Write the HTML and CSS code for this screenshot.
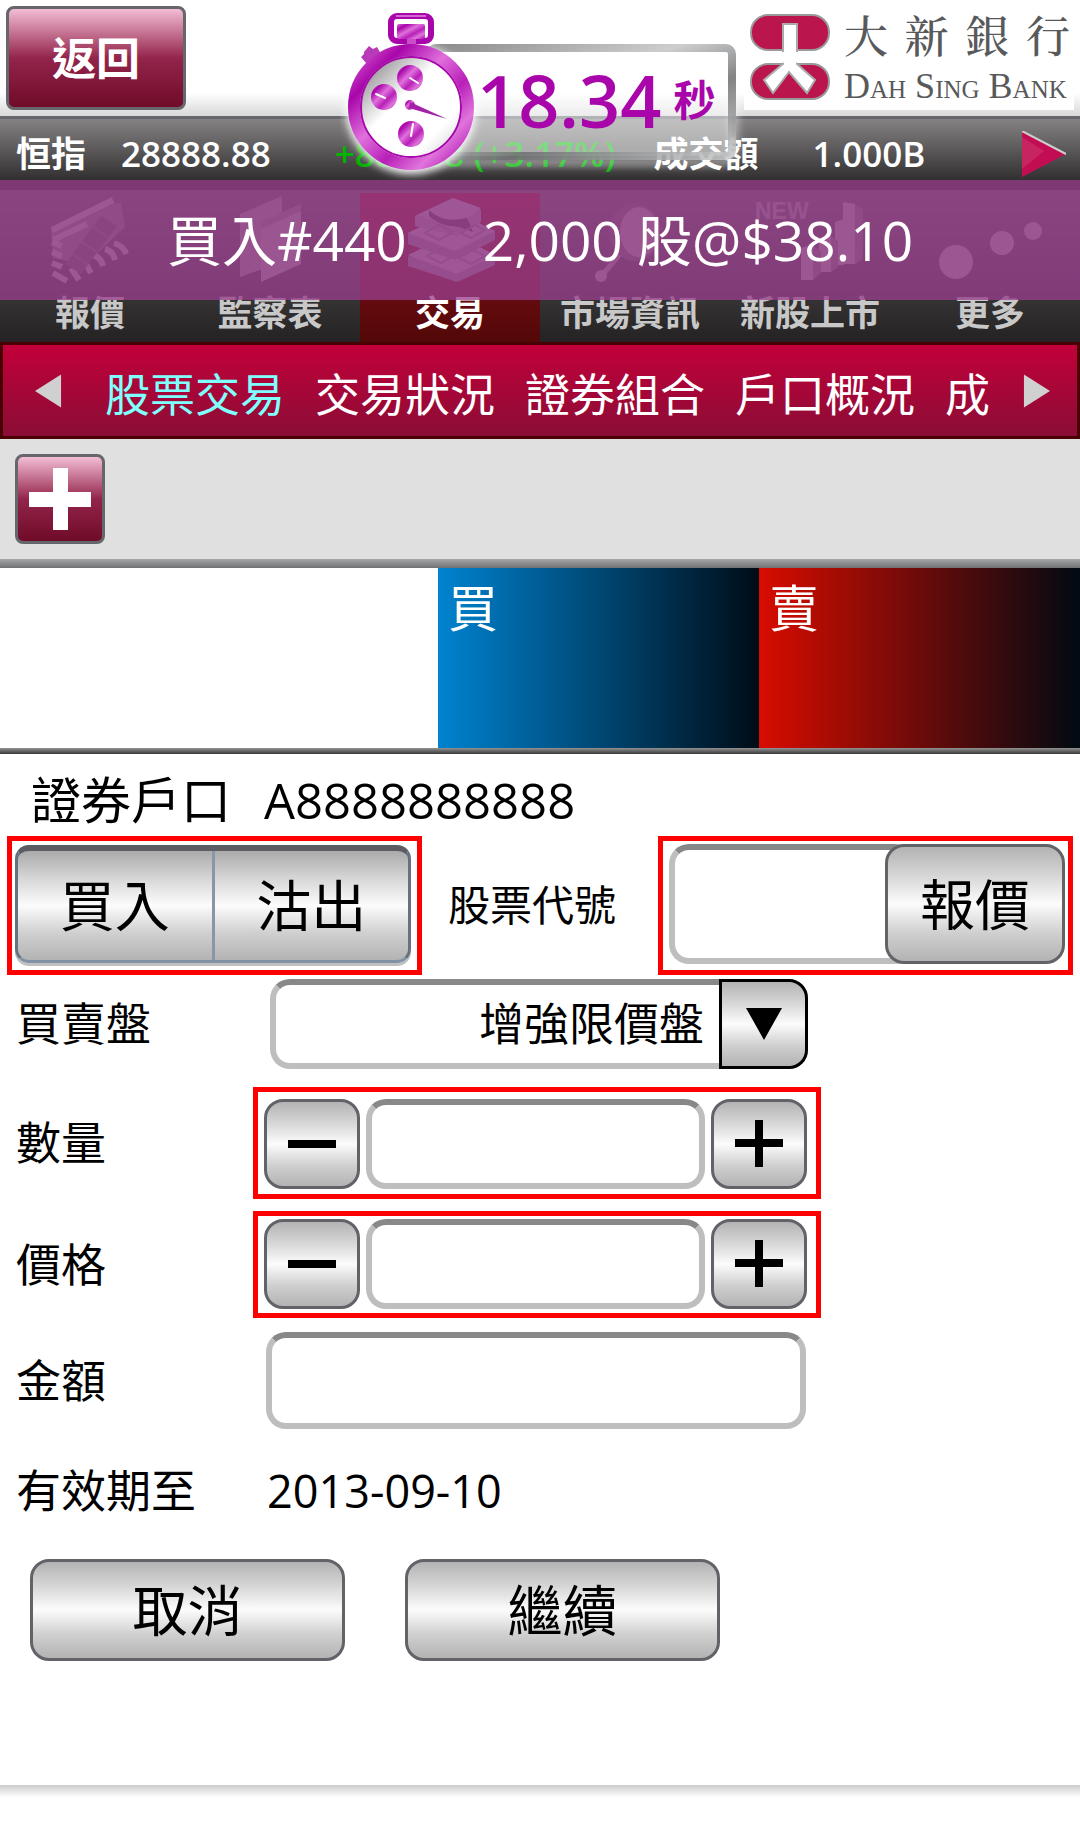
FILE: index.html
```
<!DOCTYPE html>
<html lang="zh-Hant">

<head>
    <meta charset="utf-8">
    <meta name="viewport" content="width=device-width, initial-scale=1">
    <title>股票交易</title>
    <link rel="stylesheet" href="styles.css">
</head>

<body>
    <header class="header">
        <button class="btn-red back">返回</button>

        <div class="logo">
            <svg class="logo-mark" viewBox="0 0 80 86">
                <rect x="1" y="1" width="78" height="35" rx="17" fill="#bb154d" stroke="#999" stroke-width="2" />
                <rect x="1" y="50" width="78" height="35" rx="17" fill="#bb154d" stroke="#999" stroke-width="2" />
                <path d="M33 38V10h14v28M34 49L14 66l9 13 16-21 18 21 8-13-19-17" fill="#fff" stroke="#aaa" stroke-width="2" />
                <path d="M34 35h12v16H34z" fill="#fff" />
            </svg>
            <div class="logo-text">
                <div class="logo-zh"><span>大</span><span>新</span><span>銀</span><span>行</span></div>
                <div class="logo-en">Dah Sing Bank</div>
            </div>
        </div>

        <!-- floating stopwatch -->
        <div class="timer">
            <svg class="timer-art" viewBox="0 0 410 180">
                <defs>
                    <linearGradient id="frame" x1="0" y1="0" x2="1" y2="1">
                        <stop offset="0" stop-color="#777" />
                        <stop offset=".4" stop-color="#c4c5c6" />
                        <stop offset=".64" stop-color="#6d6e70" />
                        <stop offset="1" stop-color="#c4c5c6" />
                    </linearGradient>
                    <linearGradient id="ring" x1="0" y1="0" x2="1" y2="1">
                        <stop offset="0" stop-color="#dd66d5" />
                        <stop offset=".2" stop-color="#a805aa" />
                        <stop offset=".42" stop-color="#e070dc" />
                        <stop offset=".62" stop-color="#b820b8" />
                        <stop offset=".8" stop-color="#e074dc" />
                        <stop offset="1" stop-color="#a805aa" />
                    </linearGradient>
                    <linearGradient id="face" x1="0" y1="0" x2="1" y2="1">
                        <stop offset=".1" stop-color="#858085" />
                        <stop offset=".42" stop-color="#fff" />
                        <stop offset=".72" stop-color="#fff" />
                        <stop offset="1" stop-color="#bbb" />
                    </linearGradient>
                    <filter id="glow" x="-20%" y="-20%" width="140%" height="140%">
                        <feGaussianBlur stdDeviation="4" />
                    </filter>
                </defs>
                <rect x="90" y="46" width="304" height="116" rx="10" fill="none" stroke="#fff" stroke-opacity=".5" stroke-width="8" filter="url(#glow)" />
                <rect x="90" y="48" width="302" height="108" rx="6" fill="#fff" fill-opacity=".5" />
                <rect x="90" y="48" width="302" height="108" rx="6" fill="none" stroke="url(#frame)" stroke-opacity=".85" stroke-width="8" />
                <circle cx="71" cy="109" r="65" fill="#fff" filter="url(#glow)" />
                <path d="M24 52l5-6 4 3 4-2 4 7-3 4 6 6-7 7-8-9-3 1-5-6 3-3z" fill="#b93ab8" />
                <rect x="51" y="16" width="40" height="25" rx="6" fill="none" stroke="#a805aa" stroke-width="6" />
                <path d="M56 16h30" stroke="#d564d2" stroke-width="2" />
                <rect x="57" y="24" width="28" height="15" rx="2" fill="url(#ring)" />
                <rect x="67" y="39" width="9" height="9" fill="#c94fc8" />
                <circle cx="71" cy="107" r="57" fill="url(#face)" stroke="url(#ring)" stroke-width="12" />
                <circle cx="71" cy="107" r="50" fill="none" stroke="#a805aa" stroke-width="2" />
                <g fill="url(#ring)">
                    <circle cx="70" cy="78" r="13" />
                    <circle cx="44" cy="97" r="13" />
                    <circle cx="71" cy="134" r="13" />
                    <circle cx="70" cy="105" r="5" />
                </g>
                <path d="M70 102l37 17-38-11z" fill="#a420a6" />
                <path d="M70 78l8 5M45 98l-9-4M71 136l2-12" stroke="#fff" stroke-width="2" stroke-linecap="round" />
            </svg>
            <p class="timer-text"><span class="timer-value">18.34</span><span class="timer-unit">秒</span></p>
        </div>
    </header>

    <div class="ticker">
        <span class="ticker-name">恒指</span>
        <span class="ticker-value">28888.88</span>
        <span class="ticker-change">+888.88 (+3.17%)</span>
        <span class="ticker-turnover">成交額</span>
        <span class="ticker-amount">1.000B</span>
        <svg class="ticker-next" viewBox="0 0 44 46">
            <path d="M0 0l44 23L0 46z" fill="#c30d53" />
            <path d="M0 0l44 23" stroke="#ccc" stroke-width="2" />
            <path d="M0 6l22 14L0 38z" fill="#c8366b" opacity=".6" />
        </svg>
    </div>

    <nav class="tabs">
        <a class="tab" href="#">
            <svg class="tab-icon" viewBox="0 0 90 90">
                <path d="M6 34L62 7h14l4 24-40 38L8 62z" fill="#787878" />
                <path d="M7 34L68 4M8 44l34-16M7 46l10 4M7 56l10 4M7 67l10 4M8 77l14 8M34 84l-8-12M46 77l-7-12M58 70q-2-9-10-11M70 64q-2-9-10-11M81 58q-2-8-12-11" fill="none" stroke="#adadad" stroke-width="6" />
                <path d="M56 20l16 10-36 48-16-10z" fill="#5c5c5c" />
                <path d="M48 31l15 10M36 46l16 10M27 58l15 10" stroke="#747474" stroke-width="2" />
            </svg>
            報價
        </a>
        <a class="tab" href="#">
            <svg class="tab-icon" viewBox="0 0 90 90">
                <path d="M15 18l42-18v66L15 81z" fill="#949494" />
                <path d="M36 26l40-18v60L36 86z" fill="#a4a4a4" />
                <path d="M36 26l40-18v7L36 33z" fill="#808080" />
            </svg>
            監察表
        </a>
        <a class="tab active" href="#">
            <svg class="tab-icon" viewBox="0 0 90 90">
                <path d="M3 61l45-23 42 22v9L52 86 3 70z" fill="#8e7e8e" />
                <path d="M3 59l45-22 42 22-38 19z" fill="#b6a6b6" />
                <path d="M3 37l45-22 42 20v9L50 64 3 48z" fill="#8e7e8e" />
                <path d="M3 37l45-22 42 20-40 20z" fill="#b6a6b6" />
                <path d="M10 20L48 2l28 12v12L52 40 10 30z" fill="#9e8e9e" />
                <path d="M12 19L48 2l28 10-26 20z" fill="#b6a6b6" />
                <path d="M24 14q14 14 38 8l6 14-14-5q-20-1-30-11z" fill="#4d3b50" />
                <path d="M20 37l14-8 14 7-14 8zM56 37l14-8 10 5-14 8zM22 60l14-8 14 7-14 8zM54 62l14-8 12 6-14 8z" fill="none" stroke="#89798b" stroke-width="2" />
            </svg>
            交易
        </a>
        <a class="tab" href="#">
            <svg class="tab-icon" viewBox="0 0 90 90">
                <path d="M18 78l18-21" stroke="#999" stroke-width="5" />
                <circle cx="16" cy="80" r="6" fill="#aaa" />
                <ellipse cx="50" cy="36" rx="26" ry="29" fill="#666" />
                <ellipse cx="54" cy="36" rx="19" ry="25" fill="#a4a4a4" />
            </svg>
            市場資訊
        </a>
        <a class="tab" href="#">
            <svg class="tab-icon" viewBox="0 0 90 90">
                <text x="-10" y="23" class="new-text">NEW</text>
                <path d="M36 52l12-4v36H36zM54 42l12-4v38H54zM78 6l12 2v60H78zM70 26l9-3v46h-9z" fill="#a8a8a8" />
                <path d="M48 50l8 5v22l-8 7zM66 40l7 5v26l-7 5zM90 8l8 5v50l-8 5z" fill="#777" />
            </svg>
            新股上市
        </a>
        <a class="tab" href="#">
            <svg class="tab-icon" viewBox="0 0 90 90">
                <g fill="#aaa">
                    <circle cx="11" cy="66" r="17" />
                    <circle cx="57" cy="47" r="12" />
                    <circle cx="88" cy="35" r="9" />
                </g>
            </svg>
            更多
        </a>

        <div class="order-banner">
            <span>買入#440</span>
            <span>2,000 股@$38.10</span>
        </div>
    </nav>

    <nav class="subnav">
        <svg class="subnav-arrow" viewBox="0 0 28 34"><path d="M27 0v34L0 17z" fill="#d0d0d0" /></svg>
        <div class="subnav-links">
            <a class="active" href="#">股票交易</a>
            <a href="#">交易狀況</a>
            <a href="#">證券組合</a>
            <a href="#">戶口概況</a>
            <a href="#">成</a>
        </div>
        <svg class="subnav-arrow" viewBox="0 0 28 34"><path d="M1 0v34l27-17z" fill="#d0d0d0" /></svg>
    </nav>

    <div class="toolbar">
        <button class="btn-red add" aria-label="新增">
            <svg viewBox="0 0 62 62"><path d="M24 0h15v24h23v15H39v23H24V39H0V24h24z" fill="#fff" /></svg>
        </button>
    </div>

    <div class="quote">
        <div class="quote-side buy">買</div>
        <div class="quote-side sell">賣</div>
    </div>

    <form class="order-form">
        <div class="account">
            <span>證券戶口</span>
            <span class="account-no">A8888888888</span>
        </div>

        <div class="stock-row">
            <div class="highlight side-box">
                <div class="segmented">
                    <button type="button">買入</button>
                    <button type="button">沽出</button>
                </div>
            </div>
            <label class="stock-label" for="stock">股票代號</label>
            <div class="highlight stock-box">
                <input class="field" id="stock" type="text">
                <button class="btn" type="button">報價</button>
            </div>
        </div>

        <div class="row type-row">
            <label for="type">買賣盤</label>
            <div class="dropdown">
                <select class="field" id="type">
                    <option>增強限價盤</option>
                </select>
                <span class="dropdown-arrow">
                    <svg viewBox="0 0 36 32"><path d="M0 0h36L18 32z" /></svg>
                </span>
            </div>
        </div>

        <div class="row qty-row">
            <label for="qty">數量</label>
            <div class="highlight stepper">
                <button class="btn" type="button" aria-label="減少數量">
                    <svg viewBox="0 0 48 48"><path d="M0 20h48v8H0z" /></svg>
                </button>
                <input class="field" id="qty" type="text">
                <button class="btn" type="button" aria-label="增加數量">
                    <svg viewBox="0 0 48 48"><path d="M20 0h8v19h20v8H28v20h-8V27H0v-8h20z" /></svg>
                </button>
            </div>
        </div>

        <div class="row price-row">
            <label for="price">價格</label>
            <div class="highlight stepper">
                <button class="btn" type="button" aria-label="降低價格">
                    <svg viewBox="0 0 48 48"><path d="M0 20h48v8H0z" /></svg>
                </button>
                <input class="field" id="price" type="text">
                <button class="btn" type="button" aria-label="提高價格">
                    <svg viewBox="0 0 48 48"><path d="M20 0h8v19h20v8H28v20h-8V27H0v-8h20z" /></svg>
                </button>
            </div>
        </div>

        <div class="row amount-row">
            <label for="amount">金額</label>
            <input class="field" id="amount" type="text">
        </div>

        <div class="row date-row">
            <span>有效期至</span>
            <span class="date">2013-09-10</span>
        </div>

        <div class="actions">
            <button class="btn" type="button">取消</button>
            <button class="btn" type="button">繼續</button>
        </div>
    </form>
</body>

</html>
```
FILE: styles.css
```
* {
    box-sizing: border-box;
}

body {
    margin: 0;
    background: #fff;
    color: #000;
    font-family: "Open Sans", "Noto Sans CJK TC", sans-serif;
    font-size: 45px;
    line-height: 60px;
}

a {
    color: inherit;
    text-decoration: none;
}

button,
input,
select {
    margin: 0;
    padding: 0;
    font-family: inherit;
    font-size: inherit;
    line-height: inherit;
    color: inherit;
}

svg {
    display: block;
}

.btn-red {
    display: flex;
    align-items: center;
    justify-content: center;
    border: 3px solid #65676c;
    border-radius: 8px;
    color: #fff;
    background: linear-gradient(#f3bdd5, #93244b 50%, #6f0b28);
}

.btn {
    display: flex;
    align-items: center;
    justify-content: center;
    border: 3px solid #626268;
    border-radius: 19px;
    font-size: 55px;
    background: linear-gradient(#b3b3b3, #d6d6d6 25%, #fcfcfc 50%, #d0d0d0 75%, #b3b3b3);
}

.field {
    min-width: 0;
    height: 90px;
    border: 6px solid #bebebe;
    border-top-color: #888;
    border-radius: 20px;
    background: #fff;
}

/* header */
.header {
    position: relative;
    display: flex;
    justify-content: space-between;
    align-items: flex-start;
    height: 119px;
    padding: 0 6px;
    border-bottom: 3px solid #65676c;
    background: linear-gradient(#fff 80%, #d8d8d8);
}

.back {
    width: 180px;
    height: 104px;
    margin-top: 6px;
    font-size: 44px;
    font-weight: 700;
}

.logo {
    display: flex;
    gap: 14px;
    width: 330px;
    height: 110px;
    padding: 14px 4px 0 6px;
    background: #fff;
}

.logo-mark {
    width: 80px;
    height: 86px;
}

.logo-text {
    flex: 1;
    color: #58595b;
}

.logo-zh {
    display: flex;
    justify-content: space-between;
    height: 48px;
    font-family: "Noto Serif CJK TC", "Noto Sans CJK TC", serif;
    font-size: 44px;
    font-weight: 500;
    line-height: 40px;
}

.logo-en {
    font-family: "Liberation Serif", serif;
    font-size: 36px;
    line-height: 48px;
    font-variant: small-caps;
    white-space: nowrap;
}

.timer {
    position: absolute;
    z-index: 2;
    top: 0;
    left: calc(50% - 200px);
    width: 410px;
    height: 180px;
}

.timer-art {
    position: absolute;
    width: 100%;
    height: 100%;
}

.timer-text {
    position: relative;
    display: flex;
    gap: 12px;
    margin: 0;
    padding: 60px 0 0 137px;
    line-height: 80px;
    color: #a805aa;
}

.timer-value {
    font-size: 72px;
    font-weight: 600;
}

.timer-unit {
    font-size: 42px;
    font-weight: 700;
}

/* index ticker */
.ticker {
    display: flex;
    align-items: center;
    height: 61px;
    padding: 8px 14px 0 16px;
    font-size: 35px;
    line-height: 48px;
    font-weight: 600;
    white-space: nowrap;
    color: #fff;
    background: linear-gradient(#848283, #312f30);
}

.ticker-value {
    margin-left: 35px;
}

.ticker-change {
    margin-left: 64px;
    color: #00b400;
}

.ticker-turnover {
    margin-left: 38px;
}

.ticker-amount {
    margin-left: 54px;
}

.ticker-next {
    width: 44px;
    height: 46px;
    margin-left: auto;
}

/* main tabs */
.tabs {
    position: relative;
    display: flex;
    height: 162px;
    padding-top: 10px;
    background: linear-gradient(#2a2829 10px, #5e5c5d 10px, #242223);
}

.tab {
    flex: 1;
    display: flex;
    flex-direction: column;
    align-items: center;
    padding-top: 6px;
    font-size: 35px;
    line-height: 54px;
    font-weight: 600;
    color: #c8c8c8;
}

.tab.active {
    margin-top: 3px;
    padding-top: 3px;
    color: #fff;
    background: linear-gradient(#8e1020, #530808);
}

.tab-icon {
    width: 90px;
    height: 90px;
    overflow: visible;
}

.new-text {
    font-family: "Liberation Sans", sans-serif;
    font-size: 23px;
    font-weight: 700;
    fill: #999;
}

.order-banner {
    position: absolute;
    top: 0;
    left: 0;
    right: 0;
    display: flex;
    justify-content: center;
    gap: 76px;
    height: 120px;
    font-size: 55px;
    line-height: 120px;
    color: #fff;
    background: rgba(152, 63, 140, .77);
}

.subnav {
    display: flex;
    align-items: center;
    justify-content: space-between;
    height: 97px;
    padding: 0 27px 0 32px;
    border: 3px solid #490002;
    color: #fff;
    background: linear-gradient(#c20039, #8a0d36);
}

.subnav-arrow {
    width: 27px;
    height: 34px;
}

.subnav-links {
    display: flex;
    gap: 30px;
    padding: 8px 0 0 10px;
    white-space: nowrap;
}

.subnav-links .active {
    color: #80ffff;
}

.toolbar {
    height: 129px;
    padding: 15px;
    background: linear-gradient(#a5a7a9, #717171) bottom / 100% 9px no-repeat #e0e0e0;
}

.add {
    width: 90px;
    height: 90px;
}

.add svg {
    width: 62px;
    height: 62px;
}

.quote {
    display: grid;
    grid-template-columns: 438fr 321fr 321fr;
    height: 186px;
    padding-bottom: 6px;
    background: linear-gradient(#929292, #383838) bottom / 100% 6px no-repeat;
}

.quote-side {
    padding: 10px;
    font-size: 50px;
    color: #fff;
}

.buy {
    grid-column: 2;
    background: linear-gradient(90deg, #0083d0, #000c17);
}

.sell {
    background: linear-gradient(90deg, #d80c00, #000a12);
}

/* order form */
.order-form {
    padding-bottom: 136px;
    background: linear-gradient(#cbcbcb, #fff) bottom / 100% 12px no-repeat;
}

.account {
    display: flex;
    gap: 33px;
    height: 81px;
    padding: 16px 0 0 31px;
    font-size: 50px;
}

.account-no {
    font-size: 49px;
}

.highlight {
    display: flex;
    border: 5px solid #f00;
}

.stock-row {
    display: grid;
    grid-template-columns: minmax(0, 415fr) minmax(0, 236fr) minmax(0, 415fr);
    align-items: center;
    height: 140px;
    padding: 0 7px;
}

.side-box {
    padding: 4px 6px 7px 3px;
}

.segmented {
    flex: 1;
    display: flex;
    height: 118px;
    border: 3px solid #66707e;
    border-top: 6px solid #5c5c62;
    border-bottom-color: #8292a6;
    border-radius: 14px;
    box-shadow: 0 3px #c0c0c0;
    background: linear-gradient(#aaa, #d6d6d6 25%, #fcfcfc 50%, #d0d0d0 75%, #b3b3b3);
}

.segmented button {
    flex: 1;
    border: 0;
    font-size: 55px;
    background: none;
}

.segmented button + button {
    border-left: 3px solid #8797a8;
}

.stock-label {
    padding-left: 26px;
    font-size: 42px;
    white-space: nowrap;
}

.stock-box {
    padding: 3px 3px 6px 6px;
}

.stock-box .field {
    flex: 1;
    height: 120px;
    margin-right: -30px;
}

.stock-box .btn {
    position: relative;
    flex: 0 0 180px;
    height: 120px;
}

.row {
    display: grid;
    grid-template-columns: minmax(0, 253fr) minmax(0, 568fr) minmax(0, 259fr);
    align-items: center;
}

.row > :first-child {
    padding-left: 16px;
}

.type-row {
    margin-top: 4px;
}

.dropdown {
    position: relative;
    margin: 0 13px 0 17px;
}

.dropdown .field {
    display: block;
    width: 100%;
    padding-right: 98px;
    appearance: none;
    text-align: right;
    text-align-last: right;
}

.dropdown-arrow {
    position: absolute;
    top: 0;
    right: 0;
    display: flex;
    align-items: center;
    justify-content: center;
    width: 89px;
    height: 90px;
    border: 3px solid #000;
    border-radius: 0 19px 19px 0;
    background: linear-gradient(#b3b3b3, #d6d6d6 25%, #fcfcfc 50%, #d0d0d0 75%, #b3b3b3);
    pointer-events: none;
}

.dropdown-arrow svg {
    width: 36px;
    height: 32px;
}

.qty-row {
    margin-top: 18px;
}

.stepper {
    gap: 6px;
    padding: 7px 9px 5px 6px;
}

.stepper .btn {
    flex: 0 0 96px;
    height: 90px;
}

.stepper svg {
    width: 48px;
    height: 48px;
}

.stepper .field {
    flex: 1;
}

.price-row {
    margin-top: 12px;
}

.price-row .stepper {
    padding-top: 3px;
    padding-bottom: 4px;
}

.amount-row {
    margin-top: 14px;
}

.amount-row .field {
    height: 97px;
    margin: 0 15px 0 13px;
}

.date-row {
    margin-top: 32px;
}

.date {
    padding-left: 14px;
}

.actions {
    display: flex;
    gap: 60px;
    margin-top: 38px;
    padding-left: 30px;
}

.actions .btn {
    width: 315px;
    height: 102px;
}
```
